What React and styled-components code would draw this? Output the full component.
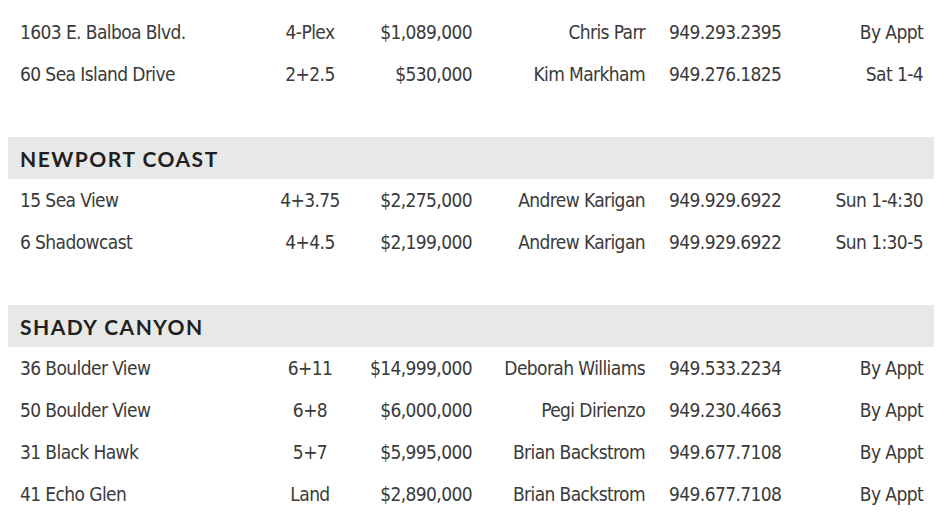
import React from "react";
import styled, { createGlobalStyle } from "styled-components";

const GlobalStyle = createGlobalStyle`
  body {
    margin: 0;
    background: #ffffff;
  }
`;

const Page = styled.div`
  width: 946px;
  padding: 11px 12px 0 8px;
  box-sizing: border-box;
  font-family: "Liberation Sans Narrow", "DejaVu Sans Condensed", "Roboto", sans-serif;
  color: #3a3a3a;
`;

const Section = styled.section`
  display: flex;
  flex-direction: column;
`;

const Band = styled.h2`
  margin: 0;
  height: 42px;
  display: flex;
  align-items: center;
  padding-left: 12px;
  background-color: #e6e9e8;
  font-family: "Lato", "Noto Sans", sans-serif;
  font-weight: 700;
  font-size: 21px;
  letter-spacing: 1.5px;
  color: #231f20;
`;

const Row = styled.div`
  height: 42px;
  display: grid;
  grid-template-columns: 240px 100px 112px 173px 135px 143px;
  align-items: center;
  padding-left: 12px;
  font-size: 19px;
  letter-spacing: -0.6px;
`;

const Cell = styled.span`
  text-align: ${({ align }) => align || "left"};
  padding-left: ${({ pad }) => (pad ? `${pad}px` : "0")};
  white-space: nowrap;
`;

const Spacer = styled.div`
  height: 42px;
`;

const sections = [
  {
    title: null,
    rows: [
      ["1603 E. Balboa Blvd.", "4-Plex", "$1,089,000", "Chris Parr", "949.293.2395", "By Appt"],
      ["60 Sea Island Drive", "2+2.5", "$530,000", "Kim Markham", "949.276.1825", "Sat 1-4"],
    ],
  },
  {
    title: "NEWPORT COAST",
    rows: [
      ["15 Sea View", "4+3.75", "$2,275,000", "Andrew Karigan", "949.929.6922", "Sun 1-4:30"],
      ["6 Shadowcast", "4+4.5", "$2,199,000", "Andrew Karigan", "949.929.6922", "Sun 1:30-5"],
    ],
  },
  {
    title: "SHADY CANYON",
    rows: [
      ["36 Boulder View", "6+11", "$14,999,000", "Deborah Williams", "949.533.2234", "By Appt"],
      ["50 Boulder View", "6+8", "$6,000,000", "Pegi Dirienzo", "949.230.4663", "By Appt"],
      ["31 Black Hawk", "5+7", "$5,995,000", "Brian Backstrom", "949.677.7108", "By Appt"],
      ["41 Echo Glen", "Land", "$2,890,000", "Brian Backstrom", "949.677.7108", "By Appt"],
    ],
  },
];

const Listing = ({ item }) => (
  <Row>
    <Cell>{item[0]}</Cell>
    <Cell align="center">{item[1]}</Cell>
    <Cell align="right">{item[2]}</Cell>
    <Cell align="right">{item[3]}</Cell>
    <Cell pad={24}>{item[4]}</Cell>
    <Cell align="right">{item[5]}</Cell>
  </Row>
);

const App = () => (
  <>
    <GlobalStyle />
    <Page>
      {sections.map((section, idx) => (
        <Section key={idx}>
          {section.title && <Band>{section.title}</Band>}
          {section.rows.map((item) => (
            <Listing key={item[0]} item={item} />
          ))}
          {idx < sections.length - 1 && <Spacer />}
        </Section>
      ))}
    </Page>
  </>
);

export default App;
